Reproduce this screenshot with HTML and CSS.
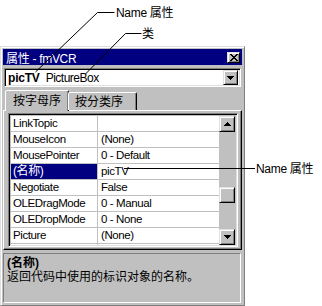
FILE: index.html
```html
<!DOCTYPE html>
<html lang="zh-CN">
<head>
    <meta charset="UTF-8">
    <title>属性窗口</title>
    <link rel="stylesheet" href="styles.css">
</head>
<body>

<div class="window">
    <div class="titlebar">
        <span class="title"><span class="cjk">属性</span> - fmVCR</span>
        <span class="btn close">
            <svg width="8" height="7" viewBox="0 0 8 7"><path d="M0 0h2v1h1v1h2V1h1V0h2v1H7v1H6v1H5v1h1v1h1v1h1v1H6V6H5V5H3v1H2v1H0V6h1V5h1V4h1V3H2V2H1V1H0z"/></svg>
        </span>
    </div>

    <div class="combo">
        <span class="obj-name">picTV</span>
        <span class="obj-class">PictureBox</span>
        <span class="btn drop">
            <svg width="7" height="4" viewBox="0 0 7 4"><path d="M0 0h7v1H6v1H5v1H4v1H3V3H2V2H1V1H0z"/></svg>
        </span>
    </div>

    <div class="tabs">
        <div class="tab active">按字母序</div>
        <div class="tab">按分类序</div>
    </div>

    <div class="panel">
        <div class="grid">
            <div class="rows">
                <div class="row"><div class="name">LinkTopic</div><div class="value"></div></div>
                <div class="row"><div class="name">MouseIcon</div><div class="value">(None)</div></div>
                <div class="row"><div class="name">MousePointer</div><div class="value">0 - Default</div></div>
                <div class="row selected"><div class="name">(名称)</div><div class="value">picTV</div></div>
                <div class="row"><div class="name">Negotiate</div><div class="value">False</div></div>
                <div class="row"><div class="name">OLEDragMode</div><div class="value">0 - Manual</div></div>
                <div class="row"><div class="name">OLEDropMode</div><div class="value">0 - None</div></div>
                <div class="row"><div class="name">Picture</div><div class="value">(None)</div></div>
                <div class="row"><div class="name"></div><div class="value"></div></div>
            </div>
            <div class="scrollbar">
                <span class="btn arrow">
                    <svg width="7" height="4" viewBox="0 0 7 4"><path d="M3 0h1v1h1v1h1v1h1v1H0V3h1V2h1V1h1z"/></svg>
                </span>
                <div class="track"><span class="btn thumb"></span></div>
                <span class="btn arrow">
                    <svg width="7" height="4" viewBox="0 0 7 4"><path d="M0 0h7v1H6v1H5v1H4v1H3V3H2V2H1V1H0z"/></svg>
                </span>
            </div>
        </div>
    </div>

    <div class="desc">
        <div class="desc-title">(名称)</div>
        <div>返回代码中使用的标识对象的名称。</div>
    </div>
</div>

<!-- 标注线 -->
<svg class="callouts" width="322" height="306" viewBox="0 0 322 306">
    <path d="M114.5 12.5H97.5L35.5 72" />
    <path d="M141.5 33.5H125.5L85.5 74" />
    <path d="M124 168.5H255" />
</svg>
<div class="label label-name">Name 属性</div>
<div class="label label-class">类</div>
<div class="label label-value">Name 属性</div>

</body>
</html>
```

FILE: styles.css
```css
body {
    margin: 0;
    width: 322px;
    height: 306px;
    overflow: hidden;
    position: relative;
    background: #fff;
    font-family: "Liberation Sans", "Noto Sans CJK SC", sans-serif;
    font-size: 11px;
    color: #000;
}
.window {
    box-sizing: border-box;
    width: 245px;
    height: 260px;
    margin-top: 46px;
    padding: 2px;
    background: #c0c0c0;
    border: 1px solid;
    border-color: #dfdfdf #808080 #808080 #dfdfdf;
    box-shadow: inset 1px 1px #fff;
}
.btn {
    box-sizing: border-box;
    display: flex;
    align-items: center;
    justify-content: center;
    background: #c0c0c0;
    border: 1px solid;
    border-color: #dfdfdf #000 #000 #dfdfdf;
    box-shadow: inset 1px 1px #fff, inset -1px -1px #808080;
}
.titlebar {
    height: 16px;
    background: #000080;
    color: #fff;
    display: flex;
    align-items: center;
    justify-content: space-between;
    padding: 0 2px 0 3px;
}
.title {
    font-size: 12px;
    letter-spacing: -0.3px;
}
.close {
    width: 13px;
    height: 11px;
}
.combo {
    box-sizing: border-box;
    height: 19px;
    width: 237px;
    margin: 3px 0 0 1px;
    display: flex;
    align-items: center;
    background: #fff;
    border: 1px solid;
    border-color: #808080 #fff #fff #808080;
    box-shadow: inset 1px 1px #000, inset -1px -1px #dfdfdf;
    padding: 0 2px 0 3px;
}
.obj-name {
    font-weight: bold;
    font-size: 12px;
    letter-spacing: -0.2px;
}
.obj-class {
    margin-left: 6px;
    flex: 1;
    font-size: 12px;
    letter-spacing: -0.5px;
}
.drop {
    width: 15px;
    height: 15px;
}
.tabs {
    display: flex;
    align-items: flex-end;
    margin: 3px 0 0 2px;
    height: 20px;
    position: relative;
    z-index: 1;
}
.tab {
    box-sizing: border-box;
    height: 18px;
    padding: 1px 6px 0;
    font-size: 12px;
    line-height: 16px;
    border: 1px solid;
    border-bottom: none;
    border-color: #fff #000 transparent #fff;
    border-radius: 2px 2px 0 0;
    box-shadow: inset -1px 0 #808080;
}
.tab.active {
    height: 21px;
    width: 64px;
    padding: 2px 7px 0;
    margin-bottom: -1px;
    background: #c0c0c0;
}
.tab:not(.active) {
    width: 69px;
    margin-left: -1px;
}
.panel {
    box-sizing: border-box;
    height: 140px;
    border: 1px solid;
    border-color: #fff #000 #000 #fff;
    box-shadow: inset -1px -1px #808080;
    padding: 2px 3px 2px 4px;
}
.grid {
    box-sizing: border-box;
    height: 134px;
    display: flex;
    border: 1px solid;
    border-color: #808080 #fff #fff #808080;
    box-shadow: inset 1px 1px #000, inset -1px -1px #dfdfdf;
    padding: 2px 2px 1px 2px;
}
.rows {
    flex: 1;
    overflow: hidden;
    background: #fff;
}
.row {
    display: flex;
    height: 15px;
    border-bottom: 1px solid #c0c0c0;
    line-height: 15px;
    font-size: 11.5px;
    letter-spacing: -0.4px;
}
.name {
    width: 84px;
    padding-left: 2px;
    border-right: 1px solid #c0c0c0;
    white-space: nowrap;
}
.value {
    flex: 1;
    padding-left: 3px;
}
.selected .name {
    background: #000080;
    color: #fff;
    font-size: 12px;
}
.scrollbar {
    width: 16px;
    display: flex;
    flex-direction: column;
    background: #c0c0c0;
}
.arrow {
    width: 16px;
    height: 16px;
}
.track {
    flex: 1;
}
.thumb {
    width: 16px;
    height: 16px;
    margin-top: 55px;
}
.desc {
    box-sizing: border-box;
    height: 50px;
    margin: 3px 1px 0 0;
    border: 1px solid;
    border-color: #808080 #fff #fff #808080;
    padding: 2px 3px;
    font-size: 12px;
    line-height: 14px;
}
.desc-title {
    font-weight: bold;
}
.callouts {
    position: absolute;
    left: 0;
    top: 0;
    fill: none;
    stroke: #000;
    stroke-width: 1;
}
.label {
    position: absolute;
    font-size: 12px;
    line-height: 14px;
    letter-spacing: -0.3px;
}
.label-name {
    left: 116px;
    top: 6px;
}
.label-class {
    left: 142px;
    top: 27px;
}
.label-value {
    left: 256px;
    top: 162px;
}
```
